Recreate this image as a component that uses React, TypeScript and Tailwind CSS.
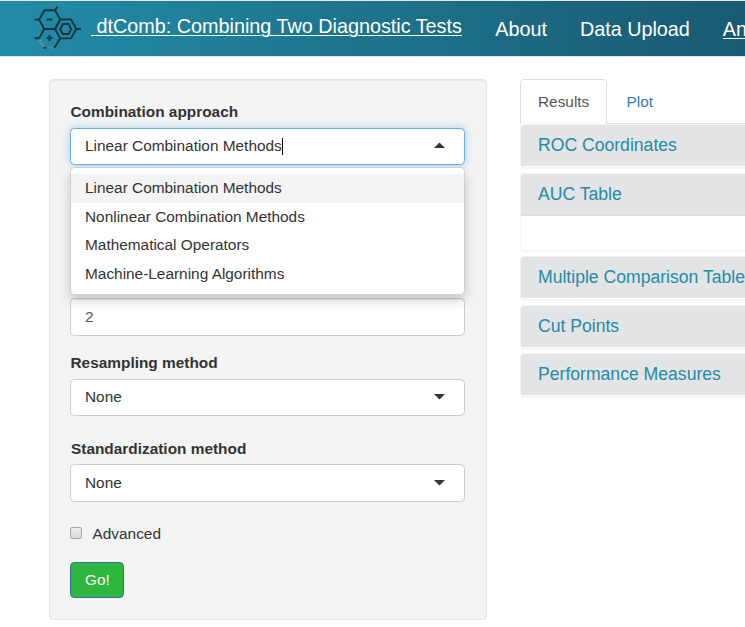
import type { ReactNode } from "react";

const methods = [
  "Linear Combination Methods",
  "Nonlinear Combination Methods",
  "Mathematical Operators",
  "Machine-Learning Algorithms",
];

function Logo() {
  return (
    <svg width="50" height="46" viewBox="0 0 50 46" fill="none" stroke="#15343f" strokeWidth="1.9" className="mt-[4px] shrink-0">
      <path d="M11.5 5.3H22L27.2 14.4L22 24H11.2L6.2 14.6Z" />
      <path d="M27.2 14.4H38L43.2 24L38 33.4H27.2L22 24Z" />
      <path d="M11.2 24L6.2 33.4M27.2 33.4L21.4 42.7M22 5.3L24.5 1.6M6.2 14.6H1.7M43.2 24H48M6.2 33.2H1.7" />
      <path d="M6.4 34.4L11.2 42.7" stroke="#7f9396" strokeDasharray="3 1" />
      <path d="M10 42.8H13.5" stroke="#23414b" />
      <path d="M16.5 42.8H20" stroke="#6f868b" />
      <path d="M29.9 19H35.5L38.3 24L35.5 29H29.9L27.1 24Z" />
      <path d="M13.6 14.5H19.4M13.6 33H19.4M16.5 30V36" />
    </svg>
  );
}

function Caret({ up = false }: { up?: boolean }) {
  return (
    <svg width="11" height="6" viewBox="0 0 11 6" className={up ? "mb-[3px] rotate-180" : ""}>
      <path d="M0 0H11L5.5 5.5Z" fill="#333" />
    </svg>
  );
}

function Select({ open = false, tall = false, children }: { open?: boolean; tall?: boolean; children: ReactNode }) {
  return (
    <div
      className={`flex shrink-0 items-center justify-between rounded-[4.4px] border bg-white pl-[14px] pr-[19px] ${
        tall ? "h-[38px]" : "h-[37px] pb-px"
      } ${open ? "border-[#66afe9] shadow-[0_0_8px_rgba(102,175,233,0.6)]" : "border-[#ccc]"}`}
    >
      {children}
      <Caret up={open} />
    </div>
  );
}

function Panel({ title, className, body = false }: { title: string; className: string; body?: boolean }) {
  return (
    <div className={`rounded-[4px] border border-[#f5f5f5] bg-white shadow-[0_1px_1px_rgba(0,0,0,0.03)] ${className}`}>
      <div className={`flex items-center rounded-t-[3px] bg-[#e3e4e5] pl-[17px] text-[17.6px] leading-5 text-[#258ba7] ${body ? "h-[42px] border-b border-[#ddd] pb-px" : "h-[41px] pb-[2px]"}`}>
        {title}
      </div>
    </div>
  );
}

export default function App() {
  return (
    <div className="h-[627px] w-[745px] overflow-hidden bg-white font-['Liberation_Sans',Arial,sans-serif] text-[15.4px] leading-[22px] text-[#333]">
      <header className="flex h-[57px] items-start overflow-hidden whitespace-nowrap border-y border-[#e7e7e7] bg-linear-to-r from-[#228ca8] to-[#195a72] pl-[33px] text-[19.8px] text-white">
        <Logo />
        <a className="ml-[8px] mt-[14px] w-[373px] shrink-0 whitespace-pre underline decoration-1 underline-offset-2"> dtComb: Combining Two Diagnostic Tests</a>
        <nav className="mt-[17px] flex gap-[33px] pl-[31.2px]">
          <a>About</a>
          <a>Data Upload</a>
          <a className="underline decoration-1 underline-offset-2">Analysis</a>
        </nav>
      </header>

      <main className="flex pl-[49px] pt-[22px]">
        <form className="flex h-[541px] w-[438px] shrink-0 flex-col rounded-[4.4px] border border-[#e3e3e3] bg-[#f4f4f4] pl-5 pr-[21px] pt-[21px] shadow-[inset_0_1px_1px_rgba(0,0,0,0.05)]">
          <label className="mb-[5px] pl-[0.5px] font-bold">Combination approach</label>
          <div className="relative">
            <Select open>
              <span className="flex items-center">
                Linear Combination Methods
                <span className="h-[17px] w-px bg-black" />
              </span>
            </Select>
            <ul className="absolute left-0 top-[39px] z-10 h-[128px] w-full rounded-[4.4px] border border-[#d0d0d0] bg-white pt-[6px] shadow-[0_6px_12px_rgba(0,0,0,0.175)]">
              {methods.map((m, i) => (
                <li key={m} className={`flex h-[28.6px] items-center pl-[14px] ${i === 0 ? "bg-[#f4f4f4]" : ""}`}>
                  {m}
                </li>
              ))}
            </ul>
          </div>
          <div className="mt-[133px] flex h-[38px] shrink-0 items-center rounded-[4.4px] border border-[#ccc] bg-white pb-px pl-[14px] text-[#555] shadow-[inset_0_1px_1px_rgba(0,0,0,0.075)]">2</div>
          <label className="mb-[5px] mt-4 pl-[0.5px] font-bold">Resampling method</label>
          <Select>None</Select>
          <label className="mb-1 mt-[22px] pl-px font-bold">Standardization method</label>
          <Select tall>None</Select>
          <div className="mt-[21px] flex items-center">
            <span className="mb-[2px] mr-[10.5px] h-3 w-3 rounded-[2px] border border-[#a5a5a5] bg-linear-to-b from-[#eee] to-[#dcdcdc]" />
            Advanced
          </div>
          <button type="button" className="mt-[17px] h-[36px] w-[54px] rounded-[4.4px] border border-[#2e6da4] bg-[#2db83d] pb-px pl-px text-white">
            Go!
          </button>
        </form>

        <section className="ml-[33px] w-[225px] shrink-0">
          <div className="flex h-[45px] border-b border-[#ddd]">
            <div className="-mb-px w-[87px] rounded-t-[4.4px] border border-b-0 border-[#ddd] bg-white pl-[17px] pt-[11px] text-[#555]">Results</div>
            <div className="pl-[19.5px] pt-3 text-[#337ab7]">Plot</div>
          </div>
          <div className="-mr-10 whitespace-nowrap">
            <Panel title="ROC Coordinates" className="h-[44px]" />
            <Panel title="AUC Table" className="mt-[5px] h-[78px]" body />
            <Panel title="Multiple Comparison Table" className="mt-[5px] h-[44px]" />
            <Panel title="Cut Points" className="mt-[5px] h-[44px]" />
            <Panel title="Performance Measures" className="mt-1 h-[44px]" />
          </div>
        </section>
      </main>
    </div>
  );
}
